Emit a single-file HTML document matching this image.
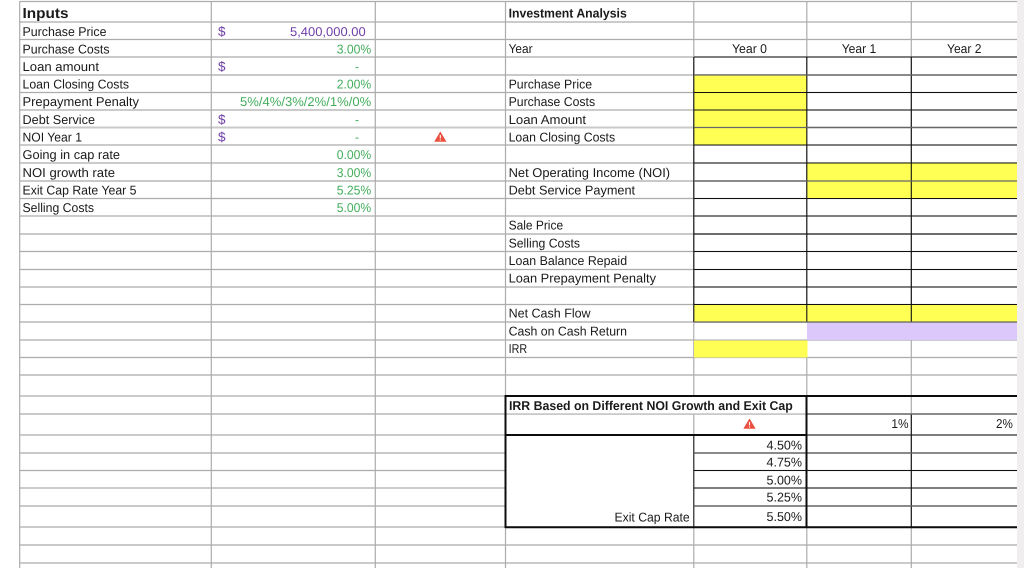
<!DOCTYPE html>
<html lang="en">
<head>
<meta charset="utf-8">
<title>Investment Analysis</title>
<style>
html,body{margin:0;padding:0;background:#fff;width:1024px;height:568px;overflow:hidden}
svg{display:block}
text{font-family:"Liberation Sans",sans-serif;font-size:12.8px;fill:#1a1a1a;text-rendering:geometricPrecision}
.b{font-weight:bold}
.p{fill:#6f3fa8}
.g{fill:#43ad5c}
.d{font-size:13.5px}
</style>
</head>
<body>
<svg width="1024" height="568" viewBox="0 0 1024 568" xmlns="http://www.w3.org/2000/svg">
<rect x="1017" y="0" width="7" height="568" fill="#f1eef0"/>
<!-- grey grid -->
<g stroke="#acacac" stroke-width="1.2" fill="none">
<path d="M20 1.5H1017M20 22H1017M20 39.5H1017M20 57H1017M20 92.5H1017M20 110H1017M20 145H1017M20 163H1017M20 198.5H1017M20 216H1017M20 251.5H1017M20 269.5H1017M20 287H1017M20 304.5H1017M20 340H1017M20 357.5H1017M20 396H1017M20 435H1017M20 470.5H1017M20 488H1017M20 527H1017M20 563H1017"/>
</g>
<g stroke="#c9c9c9" stroke-width="2" fill="none">
<path d="M20 75H1017M20 127.5H1017M20 181H1017M20 234H1017M20 322H1017M20 375H1017M20 414H1017M20 453H1017M20 506H1017M20 545H1017"/>
</g>
<g stroke="#acacac" stroke-width="1.2" fill="none">
<path d="M19.7 1V568M211.3 1V568M375.3 1V568M505.5 1V568M693.8 1V396M693.8 414V435M693.8 527V568M806.8 1V568M911.3 1V568"/>
</g>
<!-- merged cells -->
<rect x="506.5" y="436" width="187" height="90" fill="#fff"/>
<rect x="506.5" y="397" width="299" height="16.2" fill="#fff"/>
<!-- fills -->
<g fill="#ffff54">
<rect x="694" y="75" width="113" height="70"/>
<rect x="807" y="163" width="210" height="35"/>
<rect x="694" y="304.5" width="323" height="17.5"/>
<rect x="694" y="340.5" width="113.5" height="17"/>
</g>
<rect x="694.4" y="322.8" width="112.6" height="16.6" fill="#fff"/>
<rect x="807" y="323" width="210" height="17" fill="#dcc8fb"/>
<!-- black grid section -->
<g stroke="#111" stroke-width="1.1" fill="none">
<path d="M694 57H1017M694 92.5H1017M694 110H1017M694 145H1017M694 163H1017M694 198.5H1017M694 216H1017M694 234H1017M694 251.5H1017M694 269.5H1017M694 287H1017M694 304.5H1017"/>
<path d="M693.8 57V322M806.8 57V322M911.3 57V322"/>
<path d="M694 470.5H1017M694 488H1017"/>
<path d="M911.3 414V527M693.8 435V527"/>
</g>
<g stroke="#666" stroke-width="1.3" fill="none">
<path d="M694 75H1017M694 127.5H1017M694 181H1017M694 322H1017M694 453H1017M694 506H1017M807 414H1017"/>
</g>
<!-- thick table borders -->
<g stroke="#0c0c0c" stroke-width="2" fill="none">
<path d="M504.5 396H1017M505.5 395V528M505 527.2H1017M806.5 395V528M505 435H807"/>
</g>
<path d="M807 435H1017" stroke="#111" stroke-width="1.1"/>

<!-- left column labels -->
<text class="b" x="22.5" y="18" style="font-size:14.5px" textLength="46" lengthAdjust="spacingAndGlyphs">Inputs</text>
<text x="22.5" y="36" textLength="84" lengthAdjust="spacingAndGlyphs">Purchase Price</text>
<text x="22.5" y="53.5" textLength="87" lengthAdjust="spacingAndGlyphs">Purchase Costs</text>
<text x="22.5" y="71" textLength="76.5" lengthAdjust="spacingAndGlyphs">Loan amount</text>
<text x="22.5" y="88.7" textLength="106.5" lengthAdjust="spacingAndGlyphs">Loan Closing Costs</text>
<text x="22.5" y="106" textLength="116.5" lengthAdjust="spacingAndGlyphs">Prepayment Penalty</text>
<text x="22.5" y="124" textLength="72.5" lengthAdjust="spacingAndGlyphs">Debt Service</text>
<text x="22.5" y="141.5" textLength="59.5" lengthAdjust="spacingAndGlyphs">NOI Year 1</text>
<text x="22.5" y="159" textLength="97.5" lengthAdjust="spacingAndGlyphs">Going in cap rate</text>
<text x="22.5" y="177" textLength="92.5" lengthAdjust="spacingAndGlyphs">NOI growth rate</text>
<text x="22.5" y="194.5" textLength="114" lengthAdjust="spacingAndGlyphs">Exit Cap Rate Year 5</text>
<text x="22.5" y="212" textLength="71.5" lengthAdjust="spacingAndGlyphs">Selling Costs</text>

<!-- values -->
<text class="p d" x="218" y="36">$</text>
<text class="p" x="290" y="36" textLength="75.7" lengthAdjust="spacingAndGlyphs">5,400,000.00</text>
<text class="g" x="336.7" y="53.5" textLength="34.5" lengthAdjust="spacingAndGlyphs">3.00%</text>
<text class="p d" x="218" y="71">$</text>
<text class="g" x="355" y="71" textLength="4" lengthAdjust="spacingAndGlyphs">-</text>
<text class="g" x="336.7" y="88.7" textLength="34.5" lengthAdjust="spacingAndGlyphs">2.00%</text>
<text class="g" x="240" y="106" textLength="131.2" lengthAdjust="spacingAndGlyphs">5%/4%/3%/2%/1%/0%</text>
<text class="p d" x="218" y="124">$</text>
<text class="g" x="355" y="124" textLength="4" lengthAdjust="spacingAndGlyphs">-</text>
<text class="p d" x="218" y="141.5">$</text>
<text class="g" x="355" y="141.5" textLength="4" lengthAdjust="spacingAndGlyphs">-</text>
<text class="g" x="336.7" y="159" textLength="34.5" lengthAdjust="spacingAndGlyphs">0.00%</text>
<text class="g" x="336.7" y="177" textLength="34.5" lengthAdjust="spacingAndGlyphs">3.00%</text>
<text class="g" x="336.7" y="194.5" textLength="34.5" lengthAdjust="spacingAndGlyphs">5.25%</text>
<text class="g" x="336.7" y="212" textLength="34.5" lengthAdjust="spacingAndGlyphs">5.00%</text>

<!-- warning icons -->
<g>
<path d="M440.3 132L446 141.5H434.7Z" fill="#ea4f3f" stroke="#ea4f3f" stroke-width=".6" stroke-linejoin="round"/>
<path d="M440.3 135V138.4M440.3 139.4V140.5" stroke="#fff" stroke-width="1.1"/>
<path d="M749.5 419L755.2 428.5H743.8Z" fill="#ea4f3f" stroke="#ea4f3f" stroke-width=".6" stroke-linejoin="round"/>
<path d="M749.5 422V425.4M749.5 426.4V427.5" stroke="#fff" stroke-width="1.1"/>
</g>

<!-- middle labels -->
<text class="b" x="508.6" y="17.5" textLength="118.2" lengthAdjust="spacingAndGlyphs">Investment Analysis</text>
<text x="508.6" y="53" textLength="24" lengthAdjust="spacingAndGlyphs">Year</text>
<text x="732" y="53" textLength="35" lengthAdjust="spacingAndGlyphs">Year 0</text>
<text x="841.7" y="53" textLength="34.5" lengthAdjust="spacingAndGlyphs">Year 1</text>
<text x="947" y="53" textLength="34.5" lengthAdjust="spacingAndGlyphs">Year 2</text>
<text x="508.6" y="88.7" textLength="83.5" lengthAdjust="spacingAndGlyphs">Purchase Price</text>
<text x="508.6" y="106" textLength="86.5" lengthAdjust="spacingAndGlyphs">Purchase Costs</text>
<text x="508.6" y="124" textLength="77.5" lengthAdjust="spacingAndGlyphs">Loan Amount</text>
<text x="508.6" y="141.5" textLength="106.5" lengthAdjust="spacingAndGlyphs">Loan Closing Costs</text>
<text x="508.6" y="177" textLength="161.5" lengthAdjust="spacingAndGlyphs">Net Operating Income (NOI)</text>
<text x="508.6" y="194.5" textLength="126.5" lengthAdjust="spacingAndGlyphs">Debt Service Payment</text>
<text x="508.6" y="229.7" textLength="54.5" lengthAdjust="spacingAndGlyphs">Sale Price</text>
<text x="508.6" y="247.3" textLength="71.4" lengthAdjust="spacingAndGlyphs">Selling Costs</text>
<text x="508.6" y="265" textLength="118.5" lengthAdjust="spacingAndGlyphs">Loan Balance Repaid</text>
<text x="508.6" y="282.7" textLength="147.4" lengthAdjust="spacingAndGlyphs">Loan Prepayment Penalty</text>
<text x="508.6" y="317.7" textLength="82" lengthAdjust="spacingAndGlyphs">Net Cash Flow</text>
<text x="508.6" y="335.3" textLength="118.4" lengthAdjust="spacingAndGlyphs">Cash on Cash Return</text>
<text x="508.6" y="353" textLength="18.5" lengthAdjust="spacingAndGlyphs">IRR</text>

<!-- IRR table -->
<text class="b" x="509" y="410" textLength="283.8" lengthAdjust="spacingAndGlyphs">IRR Based on Different NOI Growth and Exit Cap</text>
<text x="891.4" y="428" textLength="17.2" lengthAdjust="spacingAndGlyphs">1%</text>
<text x="996" y="428" textLength="16.8" lengthAdjust="spacingAndGlyphs">2%</text>
<text x="766.5" y="449.3" textLength="35.5" lengthAdjust="spacingAndGlyphs">4.50%</text>
<text x="766.5" y="466.7" textLength="35.5" lengthAdjust="spacingAndGlyphs">4.75%</text>
<text x="766.5" y="484.5" textLength="35.5" lengthAdjust="spacingAndGlyphs">5.00%</text>
<text x="766.5" y="501.7" textLength="35.5" lengthAdjust="spacingAndGlyphs">5.25%</text>
<text x="766.5" y="521" textLength="35.5" lengthAdjust="spacingAndGlyphs">5.50%</text>
<text x="614.5" y="521.7" textLength="75.2" lengthAdjust="spacingAndGlyphs">Exit Cap Rate</text>
</svg>
</body>
</html>
